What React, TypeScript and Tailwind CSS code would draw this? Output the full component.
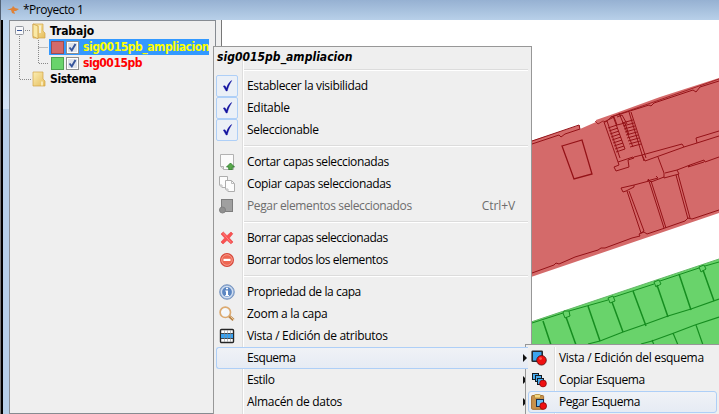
import type { ReactNode } from "react";

function Folder({ open = false }: { open?: boolean }) {
  return (
    <svg width="14" height="16" viewBox="0 0 14 16" className="shrink-0">
      <defs>
        <linearGradient id="fold" x1="0" y1="0" x2="1" y2="1">
          <stop offset="0" stopColor="#fbeeb4" />
          <stop offset="1" stopColor="#e6bd5c" />
        </linearGradient>
      </defs>
      <path d="M1 1H11V8L13 10V15H1Z" fill="url(#fold)" stroke="#d2a446" strokeWidth=".7" />
      {open && <path d="M1 1L6 3V15.7L1 13.5Z" fill="#fae9a5" stroke="#c99a3f" strokeWidth=".7" />}
      {open && <path d="M8 2.5V10" stroke="#f8f6e8" strokeWidth="1.5" />}
      {!open && <path d="M10 10.5V14.5" stroke="#fff8d8" strokeWidth="1.4" />}
    </svg>
  );
}

function TreeCheck() {
  return (
    <span className="flex h-[13px] w-[13px] shrink-0 border border-[#8e8f8f] bg-white p-px">
      <svg width="9" height="9" viewBox="0 0 9 9" className="bg-[#dfe3ea]">
        <path d="M1.5 4.5L3.8 7.3L7.5 1" fill="none" stroke="#36559b" strokeWidth="1.9" />
      </svg>
    </span>
  );
}

function MenuCheck() {
  return (
    <span className="flex h-[22px] w-[22px] items-center justify-center rounded-[2px] border border-[#aecff7] bg-[#ebf0f7]">
      <svg width="11" height="12" viewBox="0 0 11 12">
        <path d="M1.3 6L3 5.8L4.5 8.3C5.4 5.2 6.8 2.8 9.4 .5L9.7 .8C7.8 3.5 6.3 6.7 5.2 11H4.1Z" fill="#1212a0" stroke="#1212a0" strokeWidth=".4" />
      </svg>
    </span>
  );
}

const Ico = ({ children }: { children: ReactNode }) => (
  <svg width="16" height="16" viewBox="0 0 16 16">
    {children}
  </svg>
);

const icons: Record<string, ReactNode> = {
  check: <MenuCheck />,
  cut: (
    <Ico>
      <path d="M1.5 .5H14.5V15.5H4.5L1.5 12.5Z" fill="#fbfbfb" stroke="#b2b2b2" />
      <path d="M1.5 12.5H4.5V15.5" fill="#ddd" stroke="#b2b2b2" />
      <path d="M11.5 9L15.5 13H13.3V15.6H9.7V13H7.5Z" fill="#58a84b" stroke="#2c7a2b" strokeWidth=".8" />
    </Ico>
  ),
  copy: (
    <Ico>
      <path d="M.5 .5H8.5V11.5H3L.5 9Z" fill="#fcfcfc" stroke="#adadad" />
      <path d="M6.5 4.5H12.5L15.5 7.5V15.5H9L6.5 13Z" fill="#fcfcfc" stroke="#adadad" />
      <path d="M12.5 4.5V7.5H15.5M.5 9H3V11.5M6.5 13H9V15.5" fill="none" stroke="#bcbcbc" />
    </Ico>
  ),
  paste: (
    <Ico>
      <rect x="2.5" y="1.5" width="11" height="12" fill="#a0a0a0" stroke="#7d7d7d" />
      <circle cx="3.5" cy="12" r="3" fill="#909090" stroke="#818181" />
    </Ico>
  ),
  cross: (
    <Ico>
      <path d="M2 4L4.3 2L8 5.7L12 2L13.8 3.8L10.3 8L14 12L11.9 13.8L8 10.3L4 14L2 12L5.7 8Z" fill="#fa5151" stroke="#e85050" strokeWidth=".7" />
      <path d="M4 3.3L12 12.5" stroke="#ff8282" strokeWidth="1" />
    </Ico>
  ),
  minus: (
    <Ico>
      <circle cx="8" cy="8" r="6.4" fill="#ee6652" stroke="#d5483c" strokeWidth="1.2" />
      <circle cx="8" cy="8" r="5.3" fill="none" stroke="#f69a8c" />
      <rect x="4.5" y="6.8" width="7" height="2.2" fill="white" />
    </Ico>
  ),
  info: (
    <Ico>
      <circle cx="8" cy="8" r="7.3" fill="#8ba9d2" stroke="#7d99c2" />
      <circle cx="8" cy="8" r="5.6" fill="#5b86c2" stroke="#d1def0" strokeWidth="1.4" />
      <path d="M7 3.7H9V5.3H7ZM6.3 6.4H9V11H10V12.2H6.2V11H7V7.5H6.3Z" fill="white" />
    </Ico>
  ),
  zoom: (
    <Ico>
      <path d="M10 10L14.5 14" stroke="#b6854b" strokeWidth="3" />
      <path d="M11.5 10.5L15 14" stroke="#efc99a" strokeWidth="1" />
      <circle cx="6.3" cy="6.3" r="5.2" fill="#f3f7fb" stroke="#dcaa70" strokeWidth="1.7" />
      <path d="M3.5 6A3 3 0 0 1 6 3.5" fill="none" stroke="white" />
    </Ico>
  ),
  table: (
    <Ico>
      <rect x="1.5" y="1.5" width="13" height="13" rx="1" fill="white" stroke="#252525" strokeWidth="1.4" />
      <rect x="2" y="6" width="12" height="4" fill="#39a2f1" />
      <path d="M2 5.5H14M2 10.5H14" stroke="#3b4650" />
      <path d="M5.5 2.3V13.8M8.5 2.3V13.8M11.5 2.3V13.8" stroke="#8b9094" strokeWidth=".6" />
    </Ico>
  ),
  schema: (
    <Ico>
      <rect x="1.2" y="1.2" width="10" height="10" rx=".5" fill="#3da5ee" stroke="#262b30" strokeWidth="1.6" />
      <circle cx="10.5" cy="10.3" r="4.8" fill="#f01010" stroke="#4c1010" strokeWidth=".8" />
      <circle cx="9.5" cy="8.6" r="1.4" fill="#ff5a4e" />
    </Ico>
  ),
  schemaCopy: (
    <Ico>
      <g fill="#49adf0" stroke="#151b22">
        <rect x="1.5" y="1.5" width="6" height="6" />
        <rect x="4.5" y="3.5" width="6" height="6" />
        <rect x="6.5" y="6.5" width="6" height="6" />
      </g>
      <circle cx="12" cy="11.5" r="3.4" fill="#f01010" stroke="#7d0909" strokeWidth=".7" />
    </Ico>
  ),
  schemaPaste: (
    <Ico>
      <rect x=".6" y="1.5" width="12" height="13.8" rx="1" fill="#c8924c" stroke="#a56d2e" />
      <rect x="3.5" y=".5" width="6" height="3.5" rx="1" fill="#f5d681" stroke="#a98536" strokeWidth=".8" />
      <rect x="5.5" y="5.5" width="7" height="7" fill="#68bcf0" stroke="#142d50" />
      <circle cx="12.2" cy="12" r="3.4" fill="#f01010" stroke="#7d0909" strokeWidth=".7" />
    </Ico>
  ),
};

interface Item {
  label: string;
  icon?: string;
  track: string;
  hot?: boolean;
  arrow?: boolean;
  disabled?: boolean;
  shortcut?: string;
}

const groups: Item[][] = [
  [
    { label: "Establecer la visibilidad", icon: "check", track: "tracking-[-0.34px]" },
    { label: "Editable", icon: "check", track: "tracking-[-0.3px]" },
    { label: "Seleccionable", icon: "check", track: "tracking-[-0.34px]" },
  ],
  [
    { label: "Cortar capas seleccionadas", icon: "cut", track: "tracking-[-0.38px]" },
    { label: "Copiar capas seleccionadas", icon: "copy", track: "tracking-[-0.34px]" },
    { label: "Pegar elementos seleccionados", icon: "paste", track: "tracking-[-0.37px]", disabled: true, shortcut: "Ctrl+V" },
  ],
  [
    { label: "Borrar capas seleccionadas", icon: "cross", track: "tracking-[-0.45px]" },
    { label: "Borrar todos los elementos", icon: "minus", track: "tracking-[-0.45px]" },
  ],
  [
    { label: "Propriedad de la capa", icon: "info", track: "tracking-[-0.4px]" },
    { label: "Zoom a la capa", icon: "zoom", track: "tracking-[-0.3px]" },
    { label: "Vista / Edición de atributos", icon: "table", track: "tracking-[-0.3px]" },
    { label: "Esquema", track: "tracking-[-0.45px]", hot: true, arrow: true },
    { label: "Estilo", track: "tracking-[-0.4px]", arrow: true },
    { label: "Almacén de datos", track: "tracking-[-0.3px]", arrow: true },
  ],
];

const submenu: Item[] = [
  { label: "Vista / Edición del esquema", icon: "schema", track: "tracking-[-0.3px]" },
  { label: "Copiar Esquema", icon: "schemaCopy", track: "tracking-[-0.4px]" },
  { label: "Pegar Esquema", icon: "schemaPaste", track: "tracking-[-0.45px]", hot: true },
];

function MenuRow({ item }: { item: Item }) {
  return (
    <div
      className={`flex h-[22px] items-center rounded-[3px] border whitespace-nowrap ${
        item.hot ? "border-[#aecff7] bg-linear-to-b from-[#f0f2f6] to-[#e6ebf4]" : "border-transparent"
      } ${item.hot && item.arrow ? "relative z-10 mr-[1px] rounded-r-none border-r-0" : ""} ${
        item.disabled ? "text-[#6d6d6d]" : "text-black"
      }`}
    >
      <span className="-ml-px flex w-[22px] shrink-0 justify-center">{item.icon && icons[item.icon]}</span>
      <span className={`ml-[9px] ${item.track}`}>{item.label}</span>
      {item.shortcut && <span className="mr-[13px] ml-auto tracking-[-0.1px]">{item.shortcut}</span>}
      {item.arrow && (
        <svg width="4" height="8" viewBox="0 0 4 8" className="mr-px ml-auto">
          <path d="M0 0L4 4L0 8Z" fill="#111" />
        </svg>
      )}
    </div>
  );
}

function FloorMap() {
  return (
    <svg width="497" height="394" viewBox="222 20 497 394" className="block">
      <path d="M531 141L580 125V129L596 122V120L616 113L660 97L719 78V213L531 277Z" fill="#d46a6a" />
      <g fill="none" stroke="#941217" strokeWidth="1">
        <path d="M532 144L559 135L561 137L565 134L580 129L579 125L532 141" />
        <path d="M611 117L649 105L651 106L654 103L690 91L693 90L696 92L700 87L719 81" />
        <path d="M595 121L598 124L603 121L606 122L611 117L719 79" strokeWidth=".8" />
        <path d="M562 146L582 140L592 174L574 179Z" strokeWidth="1.3" />
        <path d="M604 122L618 162M607 121L620 158M613 116L625 149M619 113L633 147M629 112L644 161M631 112L646 158" />
        <path d="M604 122L614 117L617 125L625 123L629 135M617 117L622 115L627 124" />
        <path d="M608 128L617 125M609 131L618 128M610 134L619 131M611 137L620 134M612 140L621 137M613 143L622 140M614 146L623 143M615 149L624 146M616 152L625 149M622 123L633 120M623 126L634 123M624 129L635 126M625 132L636 129M626 135L637 132M627 138L638 135M628 141L639 138M629 144L640 141M630 147L641 144" />
        <path d="M618 162L633 157L634 158L628 160L629 167L616 171L614 167L619 165L618 162M634 157L642 155M642 155L682 144L684 147L645 161Z" />
        <path d="M684 147L697 143L696 138L719 131M697 143L719 136M647 181L658 178L656 176M658 157L664 173V178L679 174L677 170L665 173M677 170L690 165M688 167L690 165L704 160L705 162L719 157M688 167L704 162" />
        <path d="M621 188L634 185V187L626 191L623 192Z M634 185L649 181L648 179L651 182L664 177M676 175L688 219M678 174L690 218" />
        <path d="M627 191L641 233L644 231L629 191M649 181L664 228M651 181L666 228" />
        <path d="M532 273L554 265L556 263L559 264L575 257L598 250L601 248L605 248L632 238L640 236L639 234L644 232L647 234L662 229L685 221L688 218L692 219L719 210" />
      </g>
      <path d="M531 322L719 259V345H531Z" fill="#69d36b" />
      <path d="M531 322L719 259" stroke="#63b866" fill="none" />
      <g fill="none" stroke="#168d20">
        <path d="M532 323L563 313M569 311L608 300M614 297L654 284M660 281L699 268M705 266L719 262" />
        <path d="M563 313L564 311L569 311L570 316L565 318ZM608 298L613 296L615 301L610 303ZM654 282L659 280L661 284L656 287ZM699 267L704 265L706 269L701 272Z" />
        <path d="M543 321L551 345M566 317L576 345M588 306L600 341M612 302L623 332M633 291L646 326M657 285L668 317M679 274L691 310M703 270L714 301" strokeWidth="1.5" />
        <path d="M588 344L600 341L623 332L646 324L668 316L691 309L719 299M641 344L652 341L674 333L695 325L719 317M652 340L654 345M673 333L678 345M696 325L703 345" strokeWidth="1.2" />
      </g>
    </svg>
  );
}

export default function App() {
  return (
    <div className="relative flex h-[414px] w-[719px] flex-col overflow-hidden bg-white font-['Open_Sans',sans-serif] text-[12px] leading-none text-black">
      <header className="flex h-[20px] shrink-0 items-center border-l border-[#526174] bg-linear-to-b from-[#96b1d2] to-[#b8d0e9] pl-[6px]">
        <svg width="13" height="9" viewBox="0 0 13 9">
          <path d="M0 4L5 2L6 0L8 2L12 3L9 5L7 5L8 8L5 7L4 4Z" fill="#df8238" />
        </svg>
        <span className="ml-[3px] tracking-[-0.5px]">*Proyecto 1</span>
      </header>
      <main className="flex min-h-0 flex-1">
        <div className="w-px shrink-0 bg-[#777]" />
        <div className="flex w-[8px] shrink-0 flex-col border-l-2 border-black bg-[#b7d0e9]">
          <span className="h-[89px] bg-linear-to-b from-[#bdd5ed] to-[#d5e5f6]" />
        </div>
        <aside className="w-[207px] shrink-0 border border-[#868b91] bg-[#efefef] font-bold">
          <div className="flex pt-[2px]">
            <svg width="31" height="70" viewBox="10 23 31 70" className="shrink-0">
              <path d="M19.5 36V79.5H31M25 30.5H31" fill="none" stroke="#888" strokeDasharray="1 1" />
              <rect x="15.5" y="26.5" width="8" height="8" rx="1" fill="#f8f8fa" stroke="#91969f" />
              <path d="M17 30.5H22" stroke="#36559b" />
            </svg>
            <div className="-ml-[9px] flex flex-col font-[DejaVu_Sans] whitespace-nowrap font-stretch-condensed">
              <div className="flex h-[16px] items-center">
                <Folder open />
                <span className="ml-[4px] tracking-[-0.1px]">Trabajo</span>
              </div>
              <div className="flex">
                <svg width="17" height="32" viewBox="32 39 17 32" className="shrink-0">
                  <path d="M38.5 40V63.5H48M38.5 47.5H48" fill="none" stroke="#888" strokeDasharray="1 1" />
                </svg>
                <div className="flex flex-col">
                  <div className="flex h-[16px] w-[160px] items-center bg-[#3399ff] pl-[2px] text-[#ffff00]">
                    <span className="h-[13px] w-[13px] shrink-0 border border-[#9d4d52] bg-[#d46a6a]" />
                    <span className="ml-[2px] flex"><TreeCheck /></span>
                    <span className="ml-[4px] tracking-[-0.45px]">sig0015pb_ampliacion</span>
                  </div>
                  <div className="flex h-[16px] items-center pl-[2px] text-[#ff0000]">
                    <span className="h-[13px] w-[13px] shrink-0 border border-[#4da24f] bg-[#69d36b]" />
                    <span className="ml-[2px] flex"><TreeCheck /></span>
                    <span className="ml-[4px] tracking-[-0.5px]">sig0015pb</span>
                  </div>
                </div>
              </div>
              <div className="flex h-[16px] items-center">
                <Folder />
                <span className="ml-[4px] tracking-[-0.4px]">Sistema</span>
              </div>
            </div>
          </div>
        </aside>
        <div className="w-[6px] shrink-0 border-r border-[#777] bg-[#efefef]" />
        <FloorMap />
      </main>

      <section className="absolute top-[46px] left-[213px] h-[380px] w-[319px] border border-[#979797] bg-[#efefef] px-[2px]">
        <span className="absolute top-[9px] bottom-0 left-[28px] w-[2px] border-l border-[#dedede] bg-white" />
        <h2 className="relative flex h-[20px] items-center pl-px font-[DejaVu_Sans] text-[12px] font-bold tracking-[0.03px] whitespace-nowrap italic font-stretch-condensed">sig0015pb_ampliacion</h2>
        <div className="relative flex flex-col pt-[2px]">
          {groups.map((group, index) => (
            <div key={index}>
              <div className={`mr-[1px] ml-[28px] h-[2px] border-t border-[#dcdcdc] bg-white ${index === 0 ? "mb-[4px]" : "my-[4px]"}`} />
              {group.map((item) => (
                <MenuRow key={item.label} item={item} />
              ))}
            </div>
          ))}
        </div>
      </section>

      <section className="absolute top-[344px] left-[525px] h-[80px] w-[200px] border border-[#979797] bg-[#efefef] pt-[2px] pr-[7px] pl-[2px]">
        <span className="absolute top-[2px] bottom-0 left-[28px] w-[2px] border-l border-[#dedede] bg-white" />
        <div className="relative">
          {submenu.map((item) => (
            <MenuRow key={item.label} item={item} />
          ))}
        </div>
      </section>
    </div>
  );
}
